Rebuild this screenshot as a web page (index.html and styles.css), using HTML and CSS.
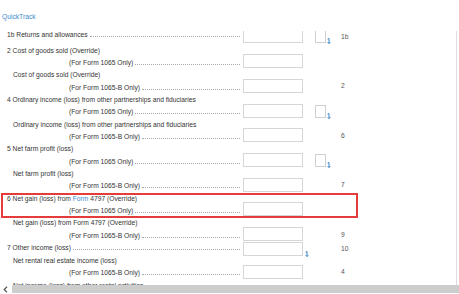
FILE: index.html
```html
<!DOCTYPE html>
<html lang="en">
<head>
  <meta charset="UTF-8">
  <title>QuickTrack</title>
  <link rel="stylesheet" href="styles.css">
</head>
<body>
  <div class="topbar">QuickTrack</div>

  <!-- scrolling form area -->
  <div class="panel">
    <div class="rows">
      <div class="row first">
        <div class="label">
          <div class="line main"><span>1b Returns and allowances</span><span class="dots"></span></div>
        </div>
        <div class="field">
          <span class="input"></span>
          <span class="extra"><span class="check"></span><svg class="flag" viewBox="0 0 4 6"><path d="M0.6 1.1 L2 0.5 V5.5 M0.6 4.1 L2 5.5 L3.4 4.1"/></svg></span>
          <span class="num">1b</span>
        </div>
      </div>

      <div class="row">
        <div class="label">
          <div class="line main"><span>2 Cost of goods sold (Override)</span></div>
          <div class="line for"><span>(For Form 1065 Only)</span><span class="dots"></span></div>
        </div>
        <div class="field">
          <span class="input"></span>
        </div>
      </div>

      <div class="row">
        <div class="label">
          <div class="line sub"><span>Cost of goods sold (Override)</span></div>
          <div class="line for"><span>(For Form 1065-B Only)</span><span class="dots"></span></div>
        </div>
        <div class="field">
          <span class="input"></span>
          <span class="extra"></span>
          <span class="num">2</span>
        </div>
      </div>

      <div class="row">
        <div class="label">
          <div class="line main"><span>4 Ordinary income (loss) from other partnerships and fiduciaries</span></div>
          <div class="line for"><span>(For Form 1065 Only)</span><span class="dots"></span></div>
        </div>
        <div class="field">
          <span class="input"></span>
          <span class="extra"><span class="check"></span><svg class="flag" viewBox="0 0 4 6"><path d="M0.6 1.1 L2 0.5 V5.5 M0.6 4.1 L2 5.5 L3.4 4.1"/></svg></span>
        </div>
      </div>

      <div class="row">
        <div class="label">
          <div class="line sub"><span>Ordinary income (loss) from other partnerships and fiduciaries</span></div>
          <div class="line for"><span>(For Form 1065-B Only)</span><span class="dots"></span></div>
        </div>
        <div class="field">
          <span class="input"></span>
          <span class="extra"></span>
          <span class="num">6</span>
        </div>
      </div>

      <div class="row">
        <div class="label">
          <div class="line main"><span>5 Net farm profit (loss)</span></div>
          <div class="line for"><span>(For Form 1065 Only)</span><span class="dots"></span></div>
        </div>
        <div class="field">
          <span class="input"></span>
          <span class="extra"><span class="check"></span><svg class="flag" viewBox="0 0 4 6"><path d="M0.6 1.1 L2 0.5 V5.5 M0.6 4.1 L2 5.5 L3.4 4.1"/></svg></span>
        </div>
      </div>

      <div class="row">
        <div class="label">
          <div class="line sub"><span>Net farm profit (loss)</span></div>
          <div class="line for"><span>(For Form 1065-B Only)</span><span class="dots"></span></div>
        </div>
        <div class="field">
          <span class="input"></span>
          <span class="extra"></span>
          <span class="num">7</span>
        </div>
      </div>

      <div class="row hl">
        <div class="label">
          <div class="line main"><span>6 Net gain (loss) from <a class="link">Form</a> 4797 (Override)</span></div>
          <div class="line for"><span>(For Form 1065 Only)</span><span class="dots"></span></div>
        </div>
        <div class="field">
          <span class="input"></span>
        </div>
      </div>

      <div class="row">
        <div class="label">
          <div class="line sub"><span>Net gain (loss) from Form 4797 (Override)</span></div>
          <div class="line for"><span>(For Form 1065-B Only)</span><span class="dots"></span></div>
        </div>
        <div class="field">
          <span class="input"></span>
          <span class="extra"></span>
          <span class="num">9</span>
        </div>
      </div>

      <div class="row single">
        <div class="label">
          <div class="line main"><span>7 Other income (loss)</span><span class="dots"></span></div>
        </div>
        <div class="field">
          <span class="input"></span>
          <span class="extra"><svg class="flag near" viewBox="0 0 4 6"><path d="M0.6 1.1 L2 0.5 V5.5 M0.6 4.1 L2 5.5 L3.4 4.1"/></svg></span>
          <span class="num">10</span>
        </div>
      </div>

      <div class="row">
        <div class="label">
          <div class="line sub"><span>Net rental real estate income (loss)</span></div>
          <div class="line for"><span>(For Form 1065-B Only)</span><span class="dots"></span></div>
        </div>
        <div class="field">
          <span class="input"></span>
          <span class="extra"></span>
          <span class="num">4</span>
        </div>
      </div>

      <div class="row">
        <div class="label">
          <div class="line sub"><span>Net income (loss) from other rental activities</span></div>
          <div class="line for"><span>(For Form 1065-B Only)</span><span class="dots"></span></div>
        </div>
        <div class="field">
          <span class="input"></span>
        </div>
      </div>
    </div>
  </div>

  <!-- horizontal scrollbar -->
  <div class="hscroll">
    <span class="arrow"><svg viewBox="0 0 5 7"><path d="M4 0.8 L1.2 3.5 L4 6.2"/></svg></span>
    <span class="thumb"></span>
  </div>
</body>
</html>
```

FILE: styles.css
```css
body {
  margin: 0;
  width: 459px;
  height: 294px;
  overflow: hidden;
  background: #fff;
  color: #333;
  font-family: "Liberation Sans", Arial, sans-serif;
  font-size: 6.7px;
}

.topbar {
  height: 31px;
  box-sizing: border-box;
  padding: 12px 0 0 2px;
  line-height: 9px;
  color: #3a8ccb;
}

.panel {
  width: 457px;
  height: 254px;
  box-sizing: border-box;
  border-right: 1px solid #dedede;
  overflow: hidden;
}

.rows {
  margin-top: -2px;
}

.row {
  display: flex;
  align-items: flex-end;
  height: 24.7px;
  position: relative;
}
.row.first {
  height: 15.5px;
  align-items: flex-start;
}
.row.single {
  height: 13px;
  align-items: center;
}

.label {
  width: 241px;
  flex: none;
  line-height: 12.35px;
}

.line {
  display: flex;
  align-items: baseline;
  white-space: nowrap;
}
.line.main { padding-left: 7px; }
.line.sub { padding-left: 13px; }
.line.for { padding-left: 69px; }

.dots {
  flex: 1;
  height: 0;
  margin: 0 1px 0 2px;
  border-bottom: 1px dotted #a9a9a9;
}

.link {
  color: #3a8ccb;
}

.field {
  display: flex;
  align-items: center;
  margin-left: 2px;
}
.row .field { margin-bottom: 1px; }
.row.first .field,
.row.single .field { margin-bottom: 0; }

.input {
  width: 60px;
  height: 14px;
  box-sizing: border-box;
  border: 1px solid #d6d6d6;
  background: #fff;
}

.extra {
  width: 38px;
  height: 14px;
  display: flex;
  align-items: flex-end;
}

.check {
  width: 11px;
  height: 13px;
  box-sizing: border-box;
  margin-left: 12px;
  border: 1px solid #d0d0d0;
}

.flag {
  width: 4px;
  height: 6px;
  margin: 0 0 -1px 1px;
  fill: none;
  stroke: #3a86c8;
  stroke-width: 1;
}
.flag.near {
  margin-left: 2px;
}

.num {
  color: #555;
}

/* highlighted row */
.hl::after {
  content: "";
  position: absolute;
  left: 1px;
  top: 0;
  width: 357px;
  height: 25px;
  box-sizing: border-box;
  border: 2px solid #e63b3b;
  pointer-events: none;
}

.hscroll {
  display: flex;
  height: 9px;
}
.arrow {
  width: 12px;
  height: 8px;
  padding-left: 3px;
  box-sizing: border-box;
  display: flex;
  align-items: center;
}
.arrow svg {
  width: 5px;
  height: 7px;
  fill: none;
  stroke: #555;
  stroke-width: 1.2;
}
.thumb {
  flex: 1;
  height: 8px;
  background: #cdcdcd;
}
```
